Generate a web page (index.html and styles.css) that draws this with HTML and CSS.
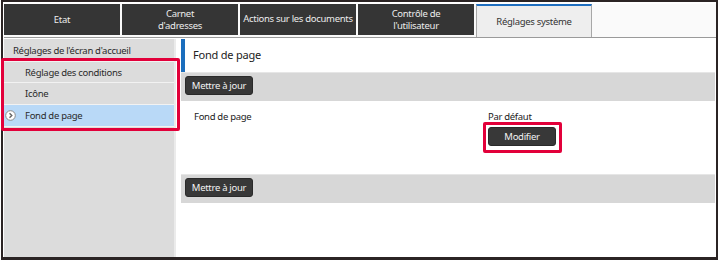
FILE: index.html
```html
<!DOCTYPE html>
<html>
<head>
  <title>Réglages système</title>
  <link rel="stylesheet" href="styles.css">
</head>
<body>
  <div class="frame">
    <nav class="tabs">
      <div class="tab">Etat</div>
      <div class="tab">Carnet<br>d'adresses</div>
      <div class="tab nowrap">Actions sur les documents</div>
      <div class="tab">Contrôle de<br>l'utilisateur</div>
      <div class="tab active">Réglages système</div>
    </nav>
    <div class="content">
      <aside class="sidebar">
        <div class="side-item">Réglages de l'écran d'accueil</div>
        <div class="side-group">
          <div class="side-item sub">Réglage des conditions</div>
          <div class="side-item sub">Icône</div>
          <div class="side-item sub current">
            <svg class="arrow" width="11" height="11" viewBox="0 0 11 11">
              <circle cx="5.5" cy="5.5" r="4.8" fill="#fff" stroke="#8a8a8a" stroke-width="1"/>
              <path d="M4.5 3.2 L6.8 5.5 L4.5 7.8" fill="none" stroke="#666" stroke-width="1.4"/>
            </svg>
            Fond de page
          </div>
        </div>
      </aside>
      <main class="main">
        <h2 class="title">Fond de page</h2>
        <div class="bar">
          <button class="btn">Mettre à jour</button>
        </div>
        <div class="row">
          <div class="label">Fond de page</div>
          <div class="value">
            <div>Par défaut</div>
            <button class="btn marked">Modifier</button>
          </div>
        </div>
        <div class="bar">
          <button class="btn">Mettre à jour</button>
        </div>
      </main>
    </div>
  </div>
</body>
</html>
```

FILE: styles.css
```css
* {
  margin: 0;
  padding: 0;
  box-sizing: border-box;
}

body {
  font-family: 'Noto Sans', 'Open Sans', sans-serif;
  background: #ffffff;
  color: #222222;
  font-size: 9.5px;
  letter-spacing: -0.3px;
}

.frame {
  width: 717px;
  height: 260px;
  margin-left: 1px;
  border: 2px solid #2b2424;
  border-bottom-width: 3px;
  background: #ffffff;
  padding: 2px 0 0 1px;
  display: flex;
  flex-direction: column;
}

.tabs {
  display: flex;
  gap: 2px;
  height: 34px;
  border-bottom: 1px solid #9a9a9a;
  background: #fafafa;
  padding-bottom: 1px;
}

.tab {
  width: 116px;
  height: 31px;
  background: #353535;
  color: #ececec;
  display: flex;
  align-items: center;
  justify-content: center;
  text-align: center;
  line-height: 12px;
}

.tab.nowrap {
  white-space: nowrap;
  padding-bottom: 2px;
}

.tab.active {
  background: #eeeeee;
  color: #333333;
  border-top: 2px solid #1f6fc0;
  border-left: 1px solid #a8a8a8;
  border-right: 1px solid #a8a8a8;
  height: 33px;
  margin-bottom: -2px;
}

.content {
  flex: 1;
  display: flex;
  padding-top: 1px;
  gap: 5px;
}

.sidebar {
  width: 172px;
  background: #dcdcdc;
  border-right: 2px solid #ebebeb;
  padding-top: 1px;
}

.side-item {
  height: 21.7px;
  display: flex;
  align-items: center;
  padding-left: 9px;
  border-bottom: 1px solid #f2f2f2;
  color: #2a2a2a;
}

.side-item.sub {
  padding-left: 21px;
}

.side-item.current {
  background: #b9d9f7;
  position: relative;
}

.arrow {
  position: absolute;
  left: 1px;
  top: 5px;
}

.side-group {
  position: relative;
}

.side-group::after {
  content: '';
  position: absolute;
  left: -3px;
  right: -6px;
  top: -4px;
  bottom: -4px;
  border: 3px solid #e2003a;
  border-radius: 2px;
}

.main {
  flex: 1;
  margin-right: 1px;
}

.title {
  height: 33px;
  border-left: 4px solid #1b6ebd;
  font-size: 11px;
  letter-spacing: -0.2px;
  font-weight: normal;
  color: #222222;
  padding: 5px 0 0 8px;
  line-height: 22px;
}

.bar {
  height: 29px;
  background: #d7d7d7;
  border-top: 1px solid #e6e6e6;
  padding: 3px 4px;
}

.btn {
  font-family: inherit;
  font-size: 9.5px;
  letter-spacing: -0.3px;
  width: 68px;
  height: 19px;
  padding: 0;
  background: #383838;
  color: #f2f2f2;
  border: 1px solid #2a2a2a;
  border-radius: 3px;
}

.marked {
  position: relative;
  margin-top: 4px;
}

.marked::after {
  content: '';
  position: absolute;
  left: -6px;
  right: -7px;
  top: -6px;
  bottom: -8px;
  border: 3px solid #e2003a;
  border-radius: 2px;
}

.row {
  height: 73px;
  display: flex;
  padding: 9px 0 0 13px;
}

.label {
  width: 294px;
}
```
